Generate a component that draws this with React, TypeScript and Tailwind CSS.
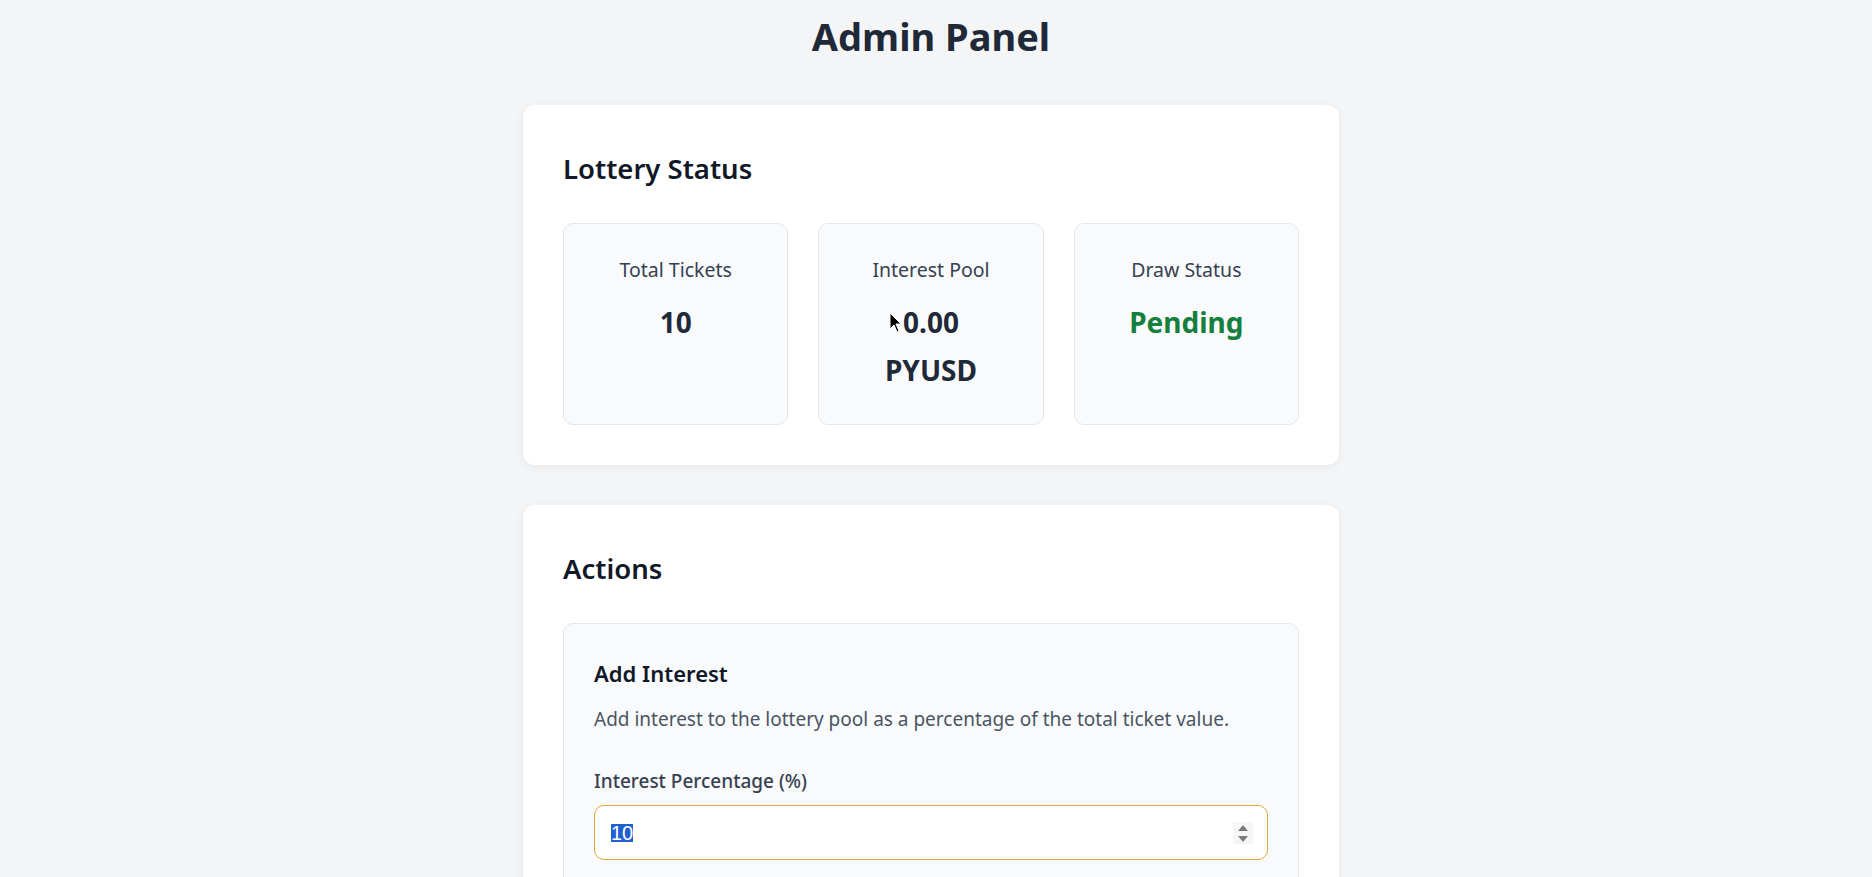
const stats = [
  { label: "Total Tickets", value: "10" },
  { label: "Interest Pool", value: "0.00 PYUSD" },
  { label: "Draw Status", value: "Pending" },
];

const Cursor = () => (
  <svg
    className="absolute left-[70px] top-[88px]"
    width="13"
    height="21"
    viewBox="0 0 13 21"
  >
    <path d="M1 1 L1 17 L5 13 L8 20 L10 19 L7 12 L12 12 Z" fill="#000" stroke="#fff" strokeWidth="1" />
  </svg>
);

const App = () => {
  return (
    <div className="min-h-screen bg-[#f4f5f7] font-['Noto_Sans',sans-serif] text-[#1f2937] pr-[10px]">
      <div className="w-[816px] mx-auto pt-1">
        <h1 className="text-center text-[38px] font-bold leading-[64px] mb-[37px]">Admin Panel</h1>

        <div className="bg-white rounded-[12px] p-10 shadow-[0_2px_10px_rgba(0,0,0,0.06)] mb-10">
          <h2 className="text-[27.5px] font-semibold leading-[48px] mb-[30px] text-[#111827]">Lottery Status</h2>
          <div className="grid grid-cols-3 gap-[30px]">
            {stats.map((s) => (
              <div
                key={s.label}
                className="relative bg-[#f8fafc] border border-[#e5e7eb] rounded-[10px] p-[30px] text-center"
              >
                <p className="text-[19.5px] leading-[32px] text-[#374151] mb-3">{s.label}</p>
                {s.label === "Interest Pool" ? (
                  <p className="text-[28px] font-bold leading-[48px]">
                    0.00
                    <br />
                    PYUSD
                  </p>
                ) : (
                  <p
                    className={
                      s.value === "Pending"
                        ? "text-[28px] font-bold leading-[48px] text-[#15803d]"
                        : "text-[28px] font-bold leading-[48px]"
                    }
                  >
                    {s.value}
                  </p>
                )}
                {s.label === "Interest Pool" && <Cursor />}
              </div>
            ))}
          </div>
        </div>

        <div className="bg-white rounded-[12px] p-10 shadow-[0_2px_10px_rgba(0,0,0,0.06)] mb-10">
          <h2 className="text-[27.5px] font-semibold leading-[48px] mb-[30px] text-[#111827]">Actions</h2>
          <div className="bg-[#f8fafc] border border-[#e5e7eb] rounded-[10px] p-[30px]">
            <h3 className="text-[22px] font-semibold leading-[38px] mb-[11px] text-[#111827]">Add Interest</h3>
            <p className="text-[19px] leading-[32px] text-[#4b5563] mb-[30px]">
              Add interest to the lottery pool as a percentage of the total ticket value.
            </p>
            <label className="block text-[19px] font-medium leading-[32px] text-[#374151] mb-2">
              Interest Percentage (%)
            </label>
            <div className="flex items-center justify-between h-[55px] bg-white border border-[#e0a83c] rounded-[10px] pl-[16px] pr-[14px]">
              <span className="font-['Liberation_Sans',sans-serif] text-[20px] leading-[18px] bg-[#2260d2] text-white">10</span>
              <svg width="20" height="22" viewBox="0 0 20 22" className="bg-[#f5f6f7]">
                <path d="M10 3 L15 9 L5 9 Z" fill="#7a7a7a" />
                <path d="M10 20 L15 14 L5 14 Z" fill="#7a7a7a" />
              </svg>
            </div>
          </div>
        </div>
      </div>
    </div>
  );
};

export default App;
